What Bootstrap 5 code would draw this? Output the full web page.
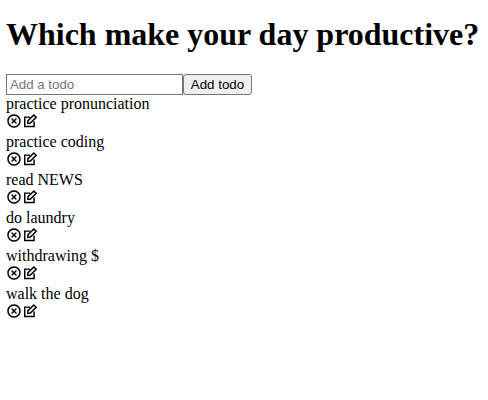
<!DOCTYPE html>
<html lang="en">
<head>
<meta charset="utf-8">
<meta name="viewport" content="width=device-width, initial-scale=1">
<title>Todo</title>
<link href="https://cdn.jsdelivr.net/npm/bootstrap@5.3.0/dist/css/bootstrap.min.css" rel="stylesheet">
<style>
  body { font-family: "Liberation Serif", "Times New Roman", serif; font-size: 16px; line-height: 18px; color: #000; background: #fff; }
  .todo-app { padding: 16px 6px 0; }
  .todo-title { font-size: 32px; line-height: 36px; margin-bottom: 22px; letter-spacing: -.01px; }
  .todo-field, .todo-add { font: 13.333px/15px "Liberation Sans", Arial, sans-serif; height: 21px; color: #000; }
  .todo-field { width: 177px; border: 1px solid #767676; padding: 1px 3px; letter-spacing: -.03px; }
  .todo-field::placeholder { color: #757575; opacity: 1; }
  .todo-add { width: 69px; border: 1px solid #767676; border-radius: 3px; background: #efefef; padding: 1px 0; }
  .todo-item { height: 38px; }
  .todo-icons { height: 16px; }
  .todo-icons svg { width: 16px; height: 16px; fill: #000; stroke: #000; stroke-width: .2; }
</style>
</head>
<body>
<svg class="d-none" xmlns="http://www.w3.org/2000/svg">
  <symbol id="remove" viewBox="0 0 24 24"><path d="M12 22C6.477 22 2 17.523 2 12S6.477 2 12 2s10 4.477 10 10-4.477 10-10 10zm0-2a8 8 0 1 0 0-16 8 8 0 0 0 0 16zm0-9.414l2.828-2.829 1.415 1.415L13.414 12l2.829 2.828-1.415 1.415L12 13.414l-2.828 2.829-1.415-1.415L10.586 12 7.757 9.172l1.415-1.415L12 10.586z"/></symbol>
  <symbol id="edit" viewBox="0 0 24 24"><path fill="none" stroke-width="2.2" d="M12 6.2H4.1v14h14v-7.5M8.8 15.5l.2-4L17.8 2.9l3.5 3.5L12.7 15z"/></symbol>
</svg>
<main class="todo-app">
  <h1 class="todo-title fw-bold text-nowrap">Which make your day productive?</h1>
  <form class="d-flex">
    <input class="todo-field" type="text" placeholder="Add a todo" aria-label="Add a todo">
    <button class="todo-add" type="button">Add todo</button>
  </form>
  <ul class="list-unstyled mb-0">
    <li class="todo-item"><div>practice pronunciation</div><div class="todo-icons d-flex"><svg><use href="#remove"/></svg><svg><use href="#edit"/></svg></div></li>
    <li class="todo-item"><div>practice coding</div><div class="todo-icons d-flex"><svg><use href="#remove"/></svg><svg><use href="#edit"/></svg></div></li>
    <li class="todo-item"><div>read NEWS</div><div class="todo-icons d-flex"><svg><use href="#remove"/></svg><svg><use href="#edit"/></svg></div></li>
    <li class="todo-item"><div>do laundry</div><div class="todo-icons d-flex"><svg><use href="#remove"/></svg><svg><use href="#edit"/></svg></div></li>
    <li class="todo-item"><div>withdrawing $</div><div class="todo-icons d-flex"><svg><use href="#remove"/></svg><svg><use href="#edit"/></svg></div></li>
    <li class="todo-item"><div>walk the dog</div><div class="todo-icons d-flex"><svg><use href="#remove"/></svg><svg><use href="#edit"/></svg></div></li>
  </ul>
</main>
<script src="https://cdn.jsdelivr.net/npm/bootstrap@5.3.0/dist/js/bootstrap.bundle.min.js"></script>
</body>
</html>
